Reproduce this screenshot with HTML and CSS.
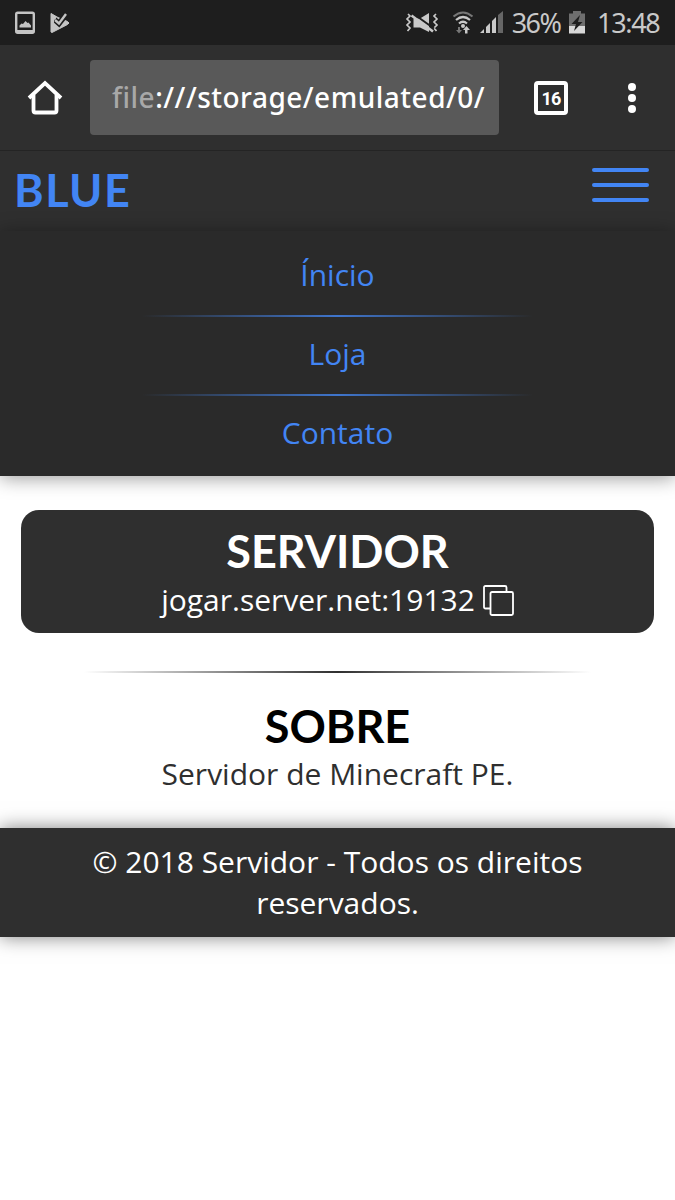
FILE: index.html
```
<!DOCTYPE html>
<html lang="pt-br">
<head>
    <meta charset="UTF-8">
    <meta name="viewport" content="width=device-width, initial-scale=1.0">
    <title>Blue</title>
    <link rel="stylesheet" href="styles.css">
</head>
<body>

    <div class="status-bar">
        <div class="status-left">
            <svg width="20" height="24" viewBox="0 0 20 24">
                <rect x="1.2" y="1.7" width="17.6" height="20" rx="1.5" fill="none" stroke="#c4c4c4" stroke-width="2.4"/>
                <path d="M1 19h18v3H1z" fill="#c4c4c4"/>
                <path d="M4.5 16.500v-2l2-2 1.500 .5 2.500-3 2 2 1-.5 2.500 3v2z" fill="#c4c4c4"/>
            </svg>
            <svg width="20" height="24" viewBox="0 0 20 24">
                <path d="M1 2.500L8 6.500 17.500 10.500 19 12 17.500 13.500 2 21.500 1 21z" fill="#c4c4c4" stroke="#c4c4c4" stroke-linejoin="round"/>
                <path d="M4.500 8.500l4.500 4L16.500 3" fill="none" stroke="#1e1e1e" stroke-width="5.500"/>
                <path d="M5 9l4 3.500L16 3" fill="none" stroke="#c4c4c4" stroke-width="2.400"/>
                <path d="M1 2.500l5 3v2L4 9v3l-3 1z" fill="#c4c4c4"/>
            </svg>
        </div>
        <div class="status-right">
            <svg width="35" height="24" viewBox="0 0 35 24">
                <path d="M3 3l2 2-3 3 3 3-3 3 3 3-2.500 3M31 3l-2 2 3 3-3 3 3 3-3 3 2.500 3" fill="none" stroke="#c9c9c9" stroke-width="1.700"/>
                <path d="M8.500 7.500h6.500L24 2v19l-9-4.500H8.500z" fill="#c9c9c9"/>
                <path d="M8 2.500L29 17.500" stroke="#1e1e1e" stroke-width="2"/>
                <path d="M6.500 4.500L28 20.500" stroke="#c9c9c9" stroke-width="2.500"/>
            </svg>
            <svg class="wifi" width="22" height="24" viewBox="0 0 22 24">
                <path d="M1.500 5.500q9.500-8 19 0" fill="none" stroke="#777" stroke-width="2"/>
                <path d="M4 9q7-6 14 0M7 12.500q4-3.500 8 0" fill="none" stroke="#c9c9c9" stroke-width="2.200"/>
                <circle cx="11" cy="15" r="2" fill="#c9c9c9"/>
                <path d="M6 16h2v3h2l-3 3.500L4 19h2z" fill="#777"/>
                <path d="M13 22.500h2.500V19H18l-3.500-4L11 19h2z" fill="#c9c9c9"/>
            </svg>
            <svg class="signal" width="24" height="24" viewBox="0 0 24 24">
                <path d="M0 22l4-4v4zM6 16l4-4v10H6zM12 10l4-4v16h-4z" fill="#c9c9c9"/>
                <path d="M18 4l5-4v22h-5z" fill="#666"/>
            </svg>
            <span class="percent">36%</span>
            <svg class="battery" width="16" height="24" viewBox="0 0 16 24">
                <path d="M0 2.500h4V0h8v2.500h4V15H0z" fill="#6e6e6e"/>
                <path d="M0 15h16v7.500H0z" fill="#d8d8d8"/>
                <path d="M11 4L2.500 13H7l-2 7 8.500-9H9z" fill="#1e1e1e"/>
            </svg>
            <span class="clock">13:48</span>
        </div>
    </div>

    <div class="browser-bar">
        <svg class="home" width="36" height="36" viewBox="0 0 36 36">
            <path d="M2 18L18 3 34 18" fill="none" stroke="#fff" stroke-width="3.800"/>
            <path d="M6.500 15v15.500q0 2 2 2h19q2 0 2-2V15" fill="none" stroke="#fff" stroke-width="3.800"/>
        </svg>
        <div class="url"><div class="url-text"><span class="scheme">file</span>:///storage/emulated/0/</div></div>
        <div class="tabs">16</div>
        <div class="dots"><i></i><i></i><i></i></div>
    </div>

    <header>
        <h1>BLUE</h1>
        <div class="menu-button"><i></i><i></i><i></i></div>
    </header>

    <nav>
        <a>Ínicio</a>
        <hr>
        <a>Loja</a>
        <hr>
        <a>Contato</a>
    </nav>

    <main>
        <section class="server">
            <h2>SERVIDOR</h2>
            <p>jogar.server.net:19132
                <svg width="31" height="31" viewBox="0 0 31 31">
                    <path d="M7 23.500H2.500q-1.500 0-1.500-1.500V2.500Q1 1 2.500 1H22q1.500 0 1.500 1.500V7" fill="none" stroke="#fff" stroke-width="1.800"/>
                    <rect x="7.500" y="7" width="22.500" height="23" rx="1.500" fill="none" stroke="#fff" stroke-width="1.800"/>
                </svg>
            </p>
        </section>
        <hr>
        <section class="about">
            <h2>SOBRE</h2>
            <p>Servidor de Minecraft PE.</p>
        </section>
    </main>

    <footer>© 2018 Servidor - Todos os direitos reservados.</footer>

</body>
</html>
```
FILE: styles.css
```
* {
    margin: 0;
    padding: 0;
    box-sizing: border-box;
}

body {
    min-height: 1200px;
    background: #fff;
    color: #2f2f2f;
    font-family: 'Open Sans', sans-serif;
    font-size: 30px;
    line-height: 41px;
    text-align: center;
}

h1, h2 {
    font-family: 'Lato', sans-serif;
    font-size: 45px;
    font-weight: bold;
    line-height: 55px;
}

/* phone */
.status-bar {
    display: flex;
    justify-content: space-between;
    align-items: center;
    height: 45px;
    padding: 0 16px 0 15px;
    background: #1e1e1e;
    color: #c9c9c9;
    font-family: 'Noto Sans', sans-serif;
    font-size: 27px;
}

.status-left, .status-right {
    display: flex;
    align-items: center;
}

.status-left {
    gap: 15px;
}

.wifi {
    margin-left: 12px;
}

.signal {
    margin-left: 6px;
}

.percent {
    width: 50px;
    margin-left: 7px;
    letter-spacing: -1.6px;
}

.battery {
    margin-left: 8px;
}

.clock {
    width: 62px;
    margin-left: 12px;
    letter-spacing: -1.3px;
}

.browser-bar {
    display: flex;
    align-items: center;
    height: 106px;
    padding-left: 27px;
    background: #2f2f2f;
    border-bottom: 1px solid #242424;
    color: #fff;
}

.url {
    width: 409px;
    height: 75px;
    margin-left: 27px;
    padding: 17px 14px 0 22px;
    background: #595959;
    border-radius: 4px;
    font-family: 'Noto Sans', sans-serif;
    font-weight: 500;
    font-size: 28px;
    letter-spacing: 0.5px;
    text-align: left;
}

.url-text {
    overflow: hidden;
    white-space: nowrap;
}

.scheme {
    color: #a8a8a8;
}

.tabs {
    width: 34px;
    height: 34px;
    margin-left: 35px;
    border: 4px solid #fff;
    border-radius: 4px;
    font-family: 'Roboto', sans-serif;
    font-size: 18px;
    font-weight: bold;
    letter-spacing: -0.8px;
    line-height: 27px;
}

.dots {
    display: flex;
    flex-direction: column;
    gap: 3px;
    margin-left: 60px;
}

.dots i {
    width: 8px;
    height: 8px;
    background: #fff;
    border-radius: 50%;
}

/* page */
header {
    display: flex;
    justify-content: space-between;
    height: 80px;
    padding: 12px 26px 0 14px;
    background: #2f2f2f;
    color: #4285f4;
}

h1 {
    letter-spacing: 1.5px;
}

.menu-button {
    display: flex;
    flex-direction: column;
    gap: 11px;
    padding-top: 5px;
}

.menu-button i {
    width: 57px;
    height: 4px;
    background: #4285f4;
    border-radius: 2px;
}

nav {
    height: 245px;
    padding-top: 23px;
    background: #2a2a2a;
    color: #4285f4;
    box-shadow: 0 2px 18px rgba(0, 0, 0, 0.4);
}

nav a {
    display: block;
}

nav hr {
    width: 58%;
    height: 2px;
    margin: 20px auto 16px;
    border: 0;
    background: linear-gradient(to right, transparent, #3f75cc, transparent);
}

main {
    padding: 34px 21px;
}

.server {
    height: 123px;
    padding-top: 14px;
    background: #2f2f2f;
    border-radius: 18px;
    color: #fff;
}

.server p {
    display: flex;
    justify-content: center;
    align-items: center;
    gap: 8px;
}

.server svg {
    margin-top: 2px;
}

main hr {
    width: 80%;
    height: 2px;
    margin: 38px auto 26px;
    border: 0;
    background: linear-gradient(to right, transparent, #2f2f2f, transparent);
}

.about h2 {
    line-height: 54px;
    color: #000;
}

footer {
    height: 109px;
    padding: 13px 60px;
    background: #2f2f2f;
    color: #fff;
    box-shadow: 0 0 18px rgba(0, 0, 0, 0.5);
}
```
